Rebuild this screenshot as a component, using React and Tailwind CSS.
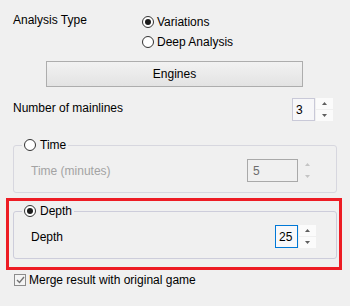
import React from 'react';

const Radio = ({ checked }) => (
  <span className="w-[12px] h-[12px] rounded-full border border-[#333333] bg-white flex items-center justify-center shrink-0">
    {checked && <span className="w-[6px] h-[6px] rounded-full bg-[#1b1b1b]" />}
  </span>
);

const Arrow = ({ up, color }) => (
  <svg width="5" height="3" viewBox="0 0 5 3">
    <path d={up ? 'M0 3 L2.5 0 L5 3 Z' : 'M0 0 L5 0 L2.5 3 Z'} fill={color} />
  </svg>
);

const Spin = ({ value, boxClass, arrowsClass, arrowColor }) => (
  <div className="flex gap-px h-[23px]">
    <div className={boxClass}>{value}</div>
    <div className="w-[17px] flex flex-col gap-px">
      <div className={arrowsClass}>
        <Arrow up color={arrowColor} />
      </div>
      <div className={arrowsClass}>
        <Arrow color={arrowColor} />
      </div>
    </div>
  </div>
);

export default function App() {
  return (
    <div className="w-[350px] h-[306px] bg-[#f0f0f0] text-[12px] leading-[16px] text-black overflow-hidden font-['Liberation_Sans',Arial,sans-serif]">
      {/* analysis type */}
      <div className="flex pl-[13px] pt-[12px]">
        <div className="w-[129px]">Analysis Type</div>
        <div className="flex flex-col">
          <label className="h-[20px] flex items-center gap-[3px]">
            <Radio checked />
            Variations
          </label>
          <label className="h-[20px] flex items-center gap-[3px]">
            <Radio />
            Deep Analysis
          </label>
        </div>
      </div>

      <div className="pl-[46px] mt-[9px]">
        <button className="w-[257px] h-[26px] border border-[#adadad] bg-linear-to-b from-[#f2f2f2] to-[#e3e3e3] text-center">
          Engines
        </button>
      </div>

      <div className="flex items-center justify-between pl-[13px] pr-[17px] mt-[11px] h-[23px]">
        <span className="pb-[3px]">Number of mainlines</span>
        <Spin
          value="3"
          boxClass="w-[23px] border border-[#c9c9d8] bg-[#f7f7f9] pl-[3px] flex items-center"
          arrowsClass="flex-1 bg-[#fbfbfb] flex items-center justify-center"
          arrowColor="#5f5f5f"
        />
      </div>

      {/* time group */}
      <fieldset className="mx-[13px] mt-[16px] border border-[#d7d7df] rounded-[3px]">
        <legend className="ml-[8px] px-[2px] h-[16px] flex items-center gap-[4px]">
          <Radio />
          Time
        </legend>
        <div className="mt-[6px] mb-[10px] pl-[17px] pr-[20px] flex items-center justify-between">
          <span className="text-[#a3a3a3]">Time (minutes)</span>
          <Spin
            value="5"
            boxClass="w-[51px] border border-[#a9a9a9] pl-[5px] flex items-center text-[#6d6d6d]"
            arrowsClass="flex-1 flex items-center justify-center"
            arrowColor="#c4c4c4"
          />
        </div>
      </fieldset>

      {/* depth group, highlighted */}
      <div className="ml-[6px] mt-[5px] w-[336px] border-[3px] border-[#ed1c24] pl-[4px] pr-[2px] pt-[2px] pb-[8px]">
        <fieldset className="border border-[#cdcddb] rounded-[3px]">
          <legend className="ml-[8px] px-[2px] h-[16px] flex items-center gap-[4px]">
            <Radio checked />
            Depth
          </legend>
          <div className="mt-[6px] mb-[10px] pl-[17px] pr-[20px] flex items-center justify-between">
            <span>Depth</span>
            <Spin
              value="25"
              boxClass="w-[23px] border border-[#0078d7] bg-[#f8f8fa] pl-[3px] flex items-center"
              arrowsClass="flex-1 bg-[#fbfbfb] flex items-center justify-center"
              arrowColor="#5f5f5f"
            />
          </div>
        </fieldset>
      </div>

      <label className="flex items-center gap-[3px] pl-[14px] mt-[4px] h-[12px]">
        <span className="w-[12px] h-[12px] border border-[#8c8c8c] bg-[#f4f4f4] flex items-center justify-center shrink-0">
          <svg width="9" height="8" viewBox="0 0 9 8">
            <path d="M1 4 L3.5 6.5 L8 1" fill="none" stroke="#737373" strokeWidth="1.4" />
          </svg>
        </span>
        Merge result with original game
      </label>
    </div>
  );
}
